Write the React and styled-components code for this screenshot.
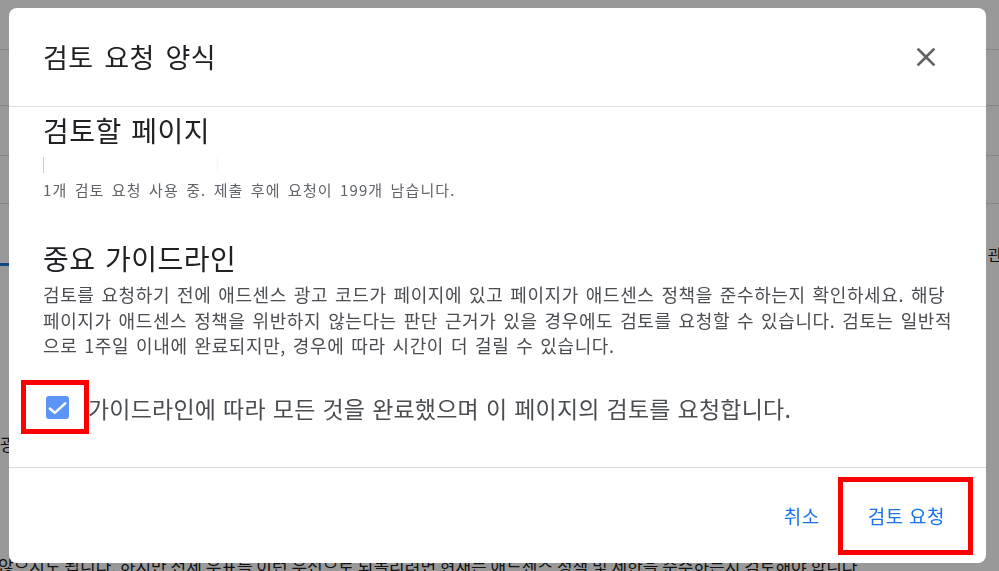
import React from 'react';
import styled, { createGlobalStyle } from 'styled-components';

const GlobalStyle = createGlobalStyle`
    html, body {
        margin: 0;
        padding: 0;
        height: 100%;
        overflow: hidden;
        background: #ffffff;
        font-family: "Noto Sans CJK KR", "Liberation Sans", sans-serif;
    }
`;

/* page behind the dialog */
const Page = styled.div`
    width: 999px;
    height: 571px;
    overflow: hidden;
`;

const PageBar = styled.div`
    height: ${props => props.h}px;
    border-bottom: 1px solid #dcdcdc;
    box-sizing: border-box;
`;

const TabRow = styled.div`
    display: flex;
    justify-content: space-between;
    align-items: flex-end;
    height: 62px;
    box-sizing: border-box;
`;

const Tab = styled.div`
    width: 80px;
    height: 3px;
    background: #1a73e8;
`;

const SideText = styled.div`
    font-size: 16px;
    line-height: 20px;
    color: #202124;
    margin: 0 -18px 2px 0;
    white-space: nowrap;
`;

const PageText = styled.div`
    font-size: 17px;
    line-height: 22px;
    color: #202124;
    white-space: nowrap;
    margin-top: ${props => props.mt}px;
    margin-left: ${props => props.ml || 0}px;
`;

/* dialog */
const Overlay = styled.div`
    position: fixed;
    inset: 0;
    background: rgba(0, 0, 0, 0.4);
    display: flex;
    padding: 8px 13px 8px 9px;
`;

const Dialog = styled.div`
    flex: 1;
    display: flex;
    flex-direction: column;
    background: #ffffff;
    border-radius: 8px;
    overflow: hidden;
`;

const Header = styled.div`
    height: 98px;
    flex-shrink: 0;
    display: flex;
    align-items: center;
    justify-content: space-between;
    padding: 0 44px 0 34px;
    border-bottom: 1px solid #dadce0;
`;

const Title = styled.h1`
    margin: 0;
    font-size: 27px;
    line-height: 32px;
    font-weight: 400;
    letter-spacing: 0.5px;
    word-spacing: 4px;
    color: #202124;
`;

const CloseButton = styled.button`
    width: 32px;
    height: 32px;
    padding: 0;
    border: none;
    background: none;
    display: flex;
    align-items: center;
    justify-content: center;
    cursor: pointer;
`;

const Body = styled.div`
    flex: 1;
    padding: 0 20px 0 34px;
`;

const SectionTitle = styled.h2`
    margin: ${props => props.mt}px 0 0 0;
    font-size: 28px;
    line-height: 32px;
    font-weight: 400;
    letter-spacing: 0.5px;
    word-spacing: 2.6px;
    color: #202124;
`;

const UrlField = styled.div`
    margin-top: 11px;
    width: 173px;
    height: 16px;
    border-left: 1px solid #aecbfa;
    border-right: 1px solid #f3f6fc;
`;

const Hint = styled.div`
    margin-top: 7px;
    font-size: 15px;
    line-height: 20px;
    letter-spacing: 1.1px;
    word-spacing: 2.9px;
    color: #5f6368;
`;

const Paragraph = styled.p`
    margin: 8px 0 0 0;
    font-size: 18px;
    line-height: 25.5px;
    letter-spacing: 0.6px;
    word-spacing: 2.3px;
    color: #4a4d51;
    white-space: nowrap;
`;

const CheckRow = styled.label`
    display: flex;
    align-items: center;
    margin-top: 35px;
    padding-left: 3px;
    height: 28px;
`;

const CheckBox = styled.span`
    position: relative;
    width: 23px;
    height: 23px;
    border-radius: 3px;
    background: #5b95f5;
    display: flex;
    align-items: center;
    justify-content: center;
    flex-shrink: 0;
`;

const Highlight = styled.span`
    position: absolute;
    border: 5px solid #ff0000;
    box-sizing: border-box;
    top: ${props => props.top}px;
    left: ${props => props.left}px;
    width: ${props => props.w}px;
    height: ${props => props.h}px;
    pointer-events: none;
`;

const CheckLabel = styled.span`
    margin-left: 19px;
    font-size: 23px;
    line-height: 28px;
    letter-spacing: 0.2px;
    word-spacing: 1.6px;
    color: #4a4d51;
    white-space: nowrap;
`;

const Footer = styled.div`
    height: 96px;
    flex-shrink: 0;
    box-sizing: border-box;
    border-top: 1px solid #dadce0;
    display: flex;
    align-items: center;
    justify-content: flex-end;
    padding-right: 17px;
`;

const TextButton = styled.button`
    position: relative;
    height: 36px;
    padding: 0 24px;
    border: none;
    background: none;
    font-family: inherit;
    font-size: 19px;
    letter-spacing: 0.5px;
    word-spacing: 0.5px;
    color: #1a73e8;
    cursor: pointer;
`;

function CloseIcon() {
    return (
        <svg width="32" height="32" viewBox="0 0 24 24">
            <path
                fill="#5f6368"
                d="M19 6.41L17.59 5 12 10.59 6.41 5 5 6.41 10.59 12 5 17.59 6.41 19 12 13.41 17.59 19 19 17.59 13.41 12z"
            />
        </svg>
    );
}

function CheckIcon() {
    return (
        <svg width="24" height="24" viewBox="0 0 24 24">
            <path fill="none" stroke="#ffffff" strokeWidth="2.6" strokeLinecap="round" strokeLinejoin="round" d="M4 12.5l5.2 4.6L20 7.2" />
        </svg>
    );
}

export default function App() {
    return (
        <>
            <GlobalStyle />
            <Page>
                <PageBar h={50} />
                <PageBar h={56} />
                <PageBar h={50} />
                <PageBar h={48} />
                <TabRow>
                    <Tab />
                    <SideText>관리</SideText>
                </TabRow>
                <PageText mt={167}>광고 단위를 설정하세요</PageText>
                <PageText mt={100} ml={-2}>않으시도 됩니다. 하지만 전체 우표를 이런 우선으로 되돌리려면 현재는 애드센스 정책 및 제한을 준수하는지 검토해야 합니다</PageText>
            </Page>
            <Overlay>
                <Dialog role="dialog">
                    <Header>
                        <Title>검토 요청 양식</Title>
                        <CloseButton aria-label="닫기">
                            <CloseIcon />
                        </CloseButton>
                    </Header>
                    <Body>
                        <SectionTitle mt={7}>검토할 페이지</SectionTitle>
                        <UrlField />
                        <Hint>1개 검토 요청 사용 중. 제출 후에 요청이 199개 남습니다.</Hint>
                        <SectionTitle mt={42}>중요 가이드라인</SectionTitle>
                        <Paragraph>
                            검토를 요청하기 전에 애드센스 광고 코드가 페이지에 있고 페이지가 애드센스 정책을 준수하는지 확인하세요. 해당
                            <br />
                            페이지가 애드센스 정책을 위반하지 않는다는 판단 근거가 있을 경우에도 검토를 요청할 수 있습니다. 검토는 일반적
                            <br />
                            으로 1주일 이내에 완료되지만, 경우에 따라 시간이 더 걸릴 수 있습니다.
                        </Paragraph>
                        <CheckRow>
                            <CheckBox>
                                <CheckIcon />
                                <Highlight top={-16} left={-25} w={68} h={54} />
                            </CheckBox>
                            <CheckLabel>가이드라인에 따라 모든 것을 완료했으며 이 페이지의 검토를 요청합니다.</CheckLabel>
                        </CheckRow>
                    </Body>
                    <Footer>
                        <TextButton>취소</TextButton>
                        <TextButton>
                            검토 요청
                            <Highlight top={-21} left={-6} w={135} h={78} />
                        </TextButton>
                    </Footer>
                </Dialog>
            </Overlay>
        </>
    );
}
